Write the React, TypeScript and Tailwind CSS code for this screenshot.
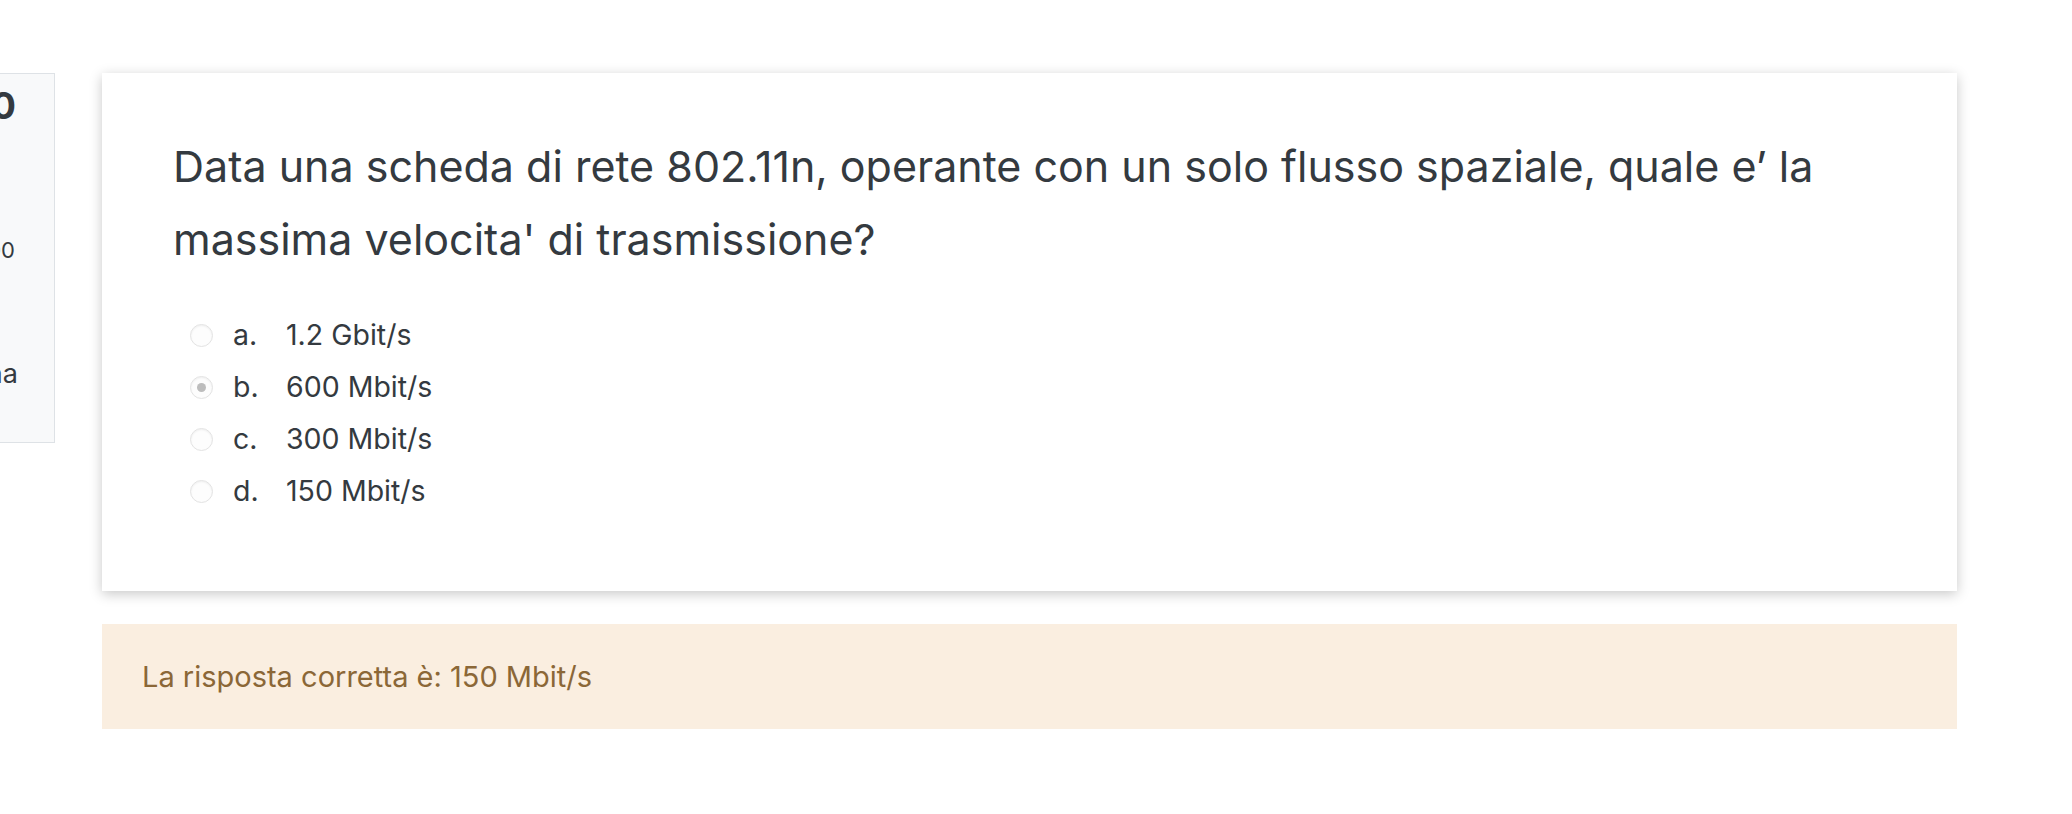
import React from 'react';

const options = [
  { letter: 'a.', text: '1.2 Gbit/s', checked: false },
  { letter: 'b.', text: '600 Mbit/s', checked: true },
  { letter: 'c.', text: '300 Mbit/s', checked: false },
  { letter: 'd.', text: '150 Mbit/s', checked: false },
];

function Radio({ checked }: { checked: boolean }) {
  return (
    <span className="w-[23px] h-[23px] rounded-full border border-[#e3e3e3] bg-[#fdfdfd] shadow-[inset_0_1px_2px_rgba(0,0,0,0.06)] flex items-center justify-center shrink-0">
      {checked && <span className="w-[9px] h-[9px] rounded-full bg-[#bdbdbd]" />}
    </span>
  );
}

export default function App() {
  return (
    <div className="min-h-[814px] bg-white text-[#343a40] flex items-start pt-[73px] font-['Inter','Liberation_Sans',sans-serif]">
      {/* info block, mostly scrolled off to the left */}
      <div className="w-[55px] h-[370px] shrink-0 overflow-hidden bg-[#f8f9fa] border border-l-0 border-[#dee2e6] flex flex-col">
        <div className="flex justify-end pr-[38px] mt-[10px] whitespace-nowrap text-[37px] font-bold leading-[44px]">
          Domanda 10
        </div>
        <div className="flex justify-end pr-[39px] mt-[107px] whitespace-nowrap text-[22px] leading-[30px]">
          Punteggio ottenuto 0,00 su 1,00
        </div>
        <div className="flex justify-end pr-[36px] mt-[89px] whitespace-nowrap text-[27px] leading-[40px]">
          Contrassegna
        </div>
      </div>

      <div className="ml-[47px] w-[1855px] flex flex-col gap-[33px]">
        <div className="bg-white h-[518px] shadow-[0_3px_12px_rgba(0,0,0,0.22)] pl-[71px] pr-[60px] pt-[57px]">
          <p className="text-[43px] leading-[73px]">
            Data una scheda di rete 802.11n, operante con un solo flusso spaziale, quale e’ la massima velocita' di trasmissione?
          </p>
          <div className="mt-[33px] flex flex-col">
            {options.map((o) => (
              <div key={o.letter} className="h-[52px] flex items-center pl-[17px]">
                <Radio checked={o.checked} />
                <span className="ml-[20px] w-[53px] text-[28.5px]">{o.letter}</span>
                <span className="text-[28.5px]">{o.text}</span>
              </div>
            ))}
          </div>
        </div>

        <div className="bg-[#faeee0] h-[105px] flex items-center pl-[40px] text-[29px] text-[#8b6737]">
          La risposta corretta è: 150 Mbit/s
        </div>
      </div>
    </div>
  );
}
